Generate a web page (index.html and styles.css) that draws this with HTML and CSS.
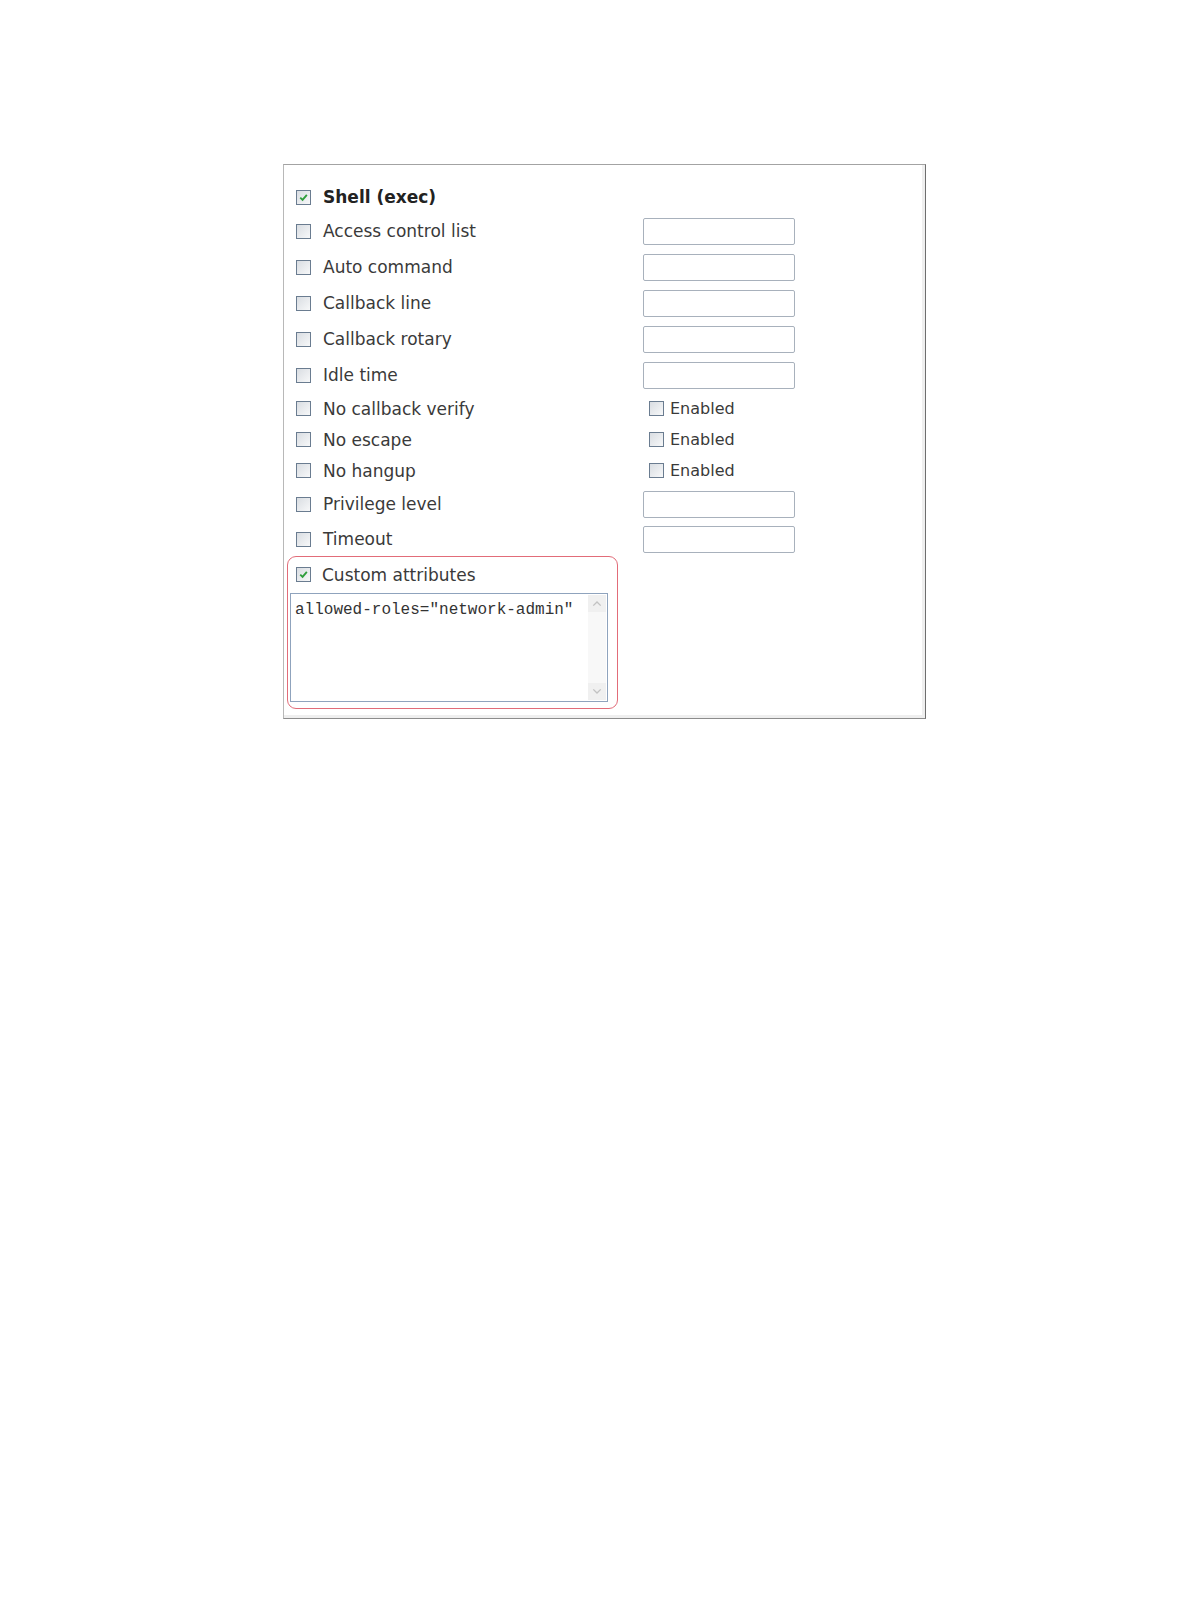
FILE: index.html
```html
<!DOCTYPE html>
<html lang="en">
<head>
    <meta charset="UTF-8">
    <title>Shell (exec) attributes</title>
    <link rel="stylesheet" href="styles.css">
</head>
<body>
    <div class="panel">
        <div class="row head">
            <label class="opt"><span class="box checked"><svg viewBox="0 0 14 14"><path d="M3.5 7.2 L6 9.6 L10.6 4.2" /></svg></span><b>Shell (exec)</b></label>
        </div>
        <div class="row">
            <label class="opt"><span class="box"></span>Access control list</label>
            <input class="field" type="text">
        </div>
        <div class="row">
            <label class="opt"><span class="box"></span>Auto command</label>
            <input class="field" type="text">
        </div>
        <div class="row">
            <label class="opt"><span class="box"></span>Callback line</label>
            <input class="field" type="text">
        </div>
        <div class="row">
            <label class="opt"><span class="box"></span>Callback rotary</label>
            <input class="field" type="text">
        </div>
        <div class="row">
            <label class="opt"><span class="box"></span>Idle time</label>
            <input class="field" type="text">
        </div>
        <div class="row short">
            <label class="opt"><span class="box"></span>No callback verify</label>
            <label class="enable"><span class="box"></span>Enabled</label>
        </div>
        <div class="row short">
            <label class="opt"><span class="box"></span>No escape</label>
            <label class="enable"><span class="box"></span>Enabled</label>
        </div>
        <div class="row short">
            <label class="opt"><span class="box"></span>No hangup</label>
            <label class="enable"><span class="box"></span>Enabled</label>
        </div>
        <div class="row">
            <label class="opt"><span class="box"></span>Privilege level</label>
            <input class="field" type="text">
        </div>
        <div class="row last">
            <label class="opt"><span class="box"></span>Timeout</label>
            <input class="field" type="text">
        </div>
        <div class="custom">
            <label class="opt"><span class="box checked"><svg viewBox="0 0 14 14"><path d="M3.5 7.2 L6 9.6 L10.6 4.2" /></svg></span>Custom attributes</label>
            <div class="attr-box">
                <div class="attr-text">allowed-roles="network-admin"</div>
                <div class="scroll">
                    <span class="arrow"><svg viewBox="0 0 16 16"><path d="M4.5 10 L8 6.5 L11.5 10" /></svg></span>
                    <span class="arrow"><svg viewBox="0 0 16 16"><path d="M4.5 6 L8 9.5 L11.5 6" /></svg></span>
                </div>
            </div>
        </div>
    </div>
</body>
</html>
```

FILE: styles.css
```css
body {
    margin: 0;
    background: #fff;
    color: #3a3a3a;
    font-family: "DejaVu Sans", Verdana, sans-serif;
}

.panel {
    box-sizing: border-box;
    width: 643px;
    height: 555px;
    margin: 164px 0 0 283px;
    padding: 16px 0 0 3px;
    background: #fff;
    border: 1px solid;
    border-color: #a3a3a3 #6e6e6e #8c8c8c #b8b8b8;
    box-shadow: inset -3px -3px 0 #efefef;
}

.row {
    display: grid;
    grid-template-columns: 347px 1fr;
    align-items: center;
    height: 36px;
    padding-left: 9px;
}

.row.head { height: 32px; }
.row.short { height: 31px; }
.row.last { height: 34px; }

.opt {
    display: flex;
    align-items: center;
    gap: 12px;
    font-size: 17px;
    white-space: nowrap;
}

.opt b {
    color: #222;
}

.box {
    box-sizing: border-box;
    width: 15px;
    height: 15px;
    flex: none;
    border: 1px solid #6a7c90;
    background: linear-gradient(135deg, #d9dde2, #f7f8f9);
}

.box svg {
    display: block;
    width: 13px;
    height: 13px;
}

.box path {
    fill: none;
    stroke: #2f9e3c;
    stroke-width: 2;
}

.field {
    box-sizing: border-box;
    width: 152px;
    height: 27px;
    margin: 0;
    border: 1px solid #a8b1bc;
    border-radius: 2px;
    background: #fff;
}

.enable {
    display: flex;
    align-items: center;
    gap: 6px;
    padding-left: 6px;
    font-size: 16px;
}

.custom {
    box-sizing: border-box;
    width: 331px;
    height: 153px;
    border: 1.5px solid #e26c79;
    border-radius: 9px;
}

.custom .opt {
    height: 35px;
    padding-left: 8px;
    gap: 11px;
}

.attr-box {
    box-sizing: border-box;
    display: flex;
    width: 318px;
    height: 109px;
    margin: 1px 0 0 2px;
    border: 1px solid #8fa3bd;
}

.attr-text {
    flex: 1;
    padding: 6px 0 0 4px;
    font-family: "Liberation Mono", "Courier New", monospace;
    font-size: 16px;
    line-height: 20px;
    color: #333;
}

.scroll {
    display: flex;
    flex-direction: column;
    justify-content: space-between;
    width: 18px;
    margin: 1px;
    background: #f8f8f8;
}

.arrow {
    height: 17px;
    background: #f0f0f0;
}

.arrow svg {
    display: block;
    width: 18px;
    height: 17px;
}

.arrow path {
    fill: none;
    stroke: #c2c2c2;
    stroke-width: 1.3;
}
```
